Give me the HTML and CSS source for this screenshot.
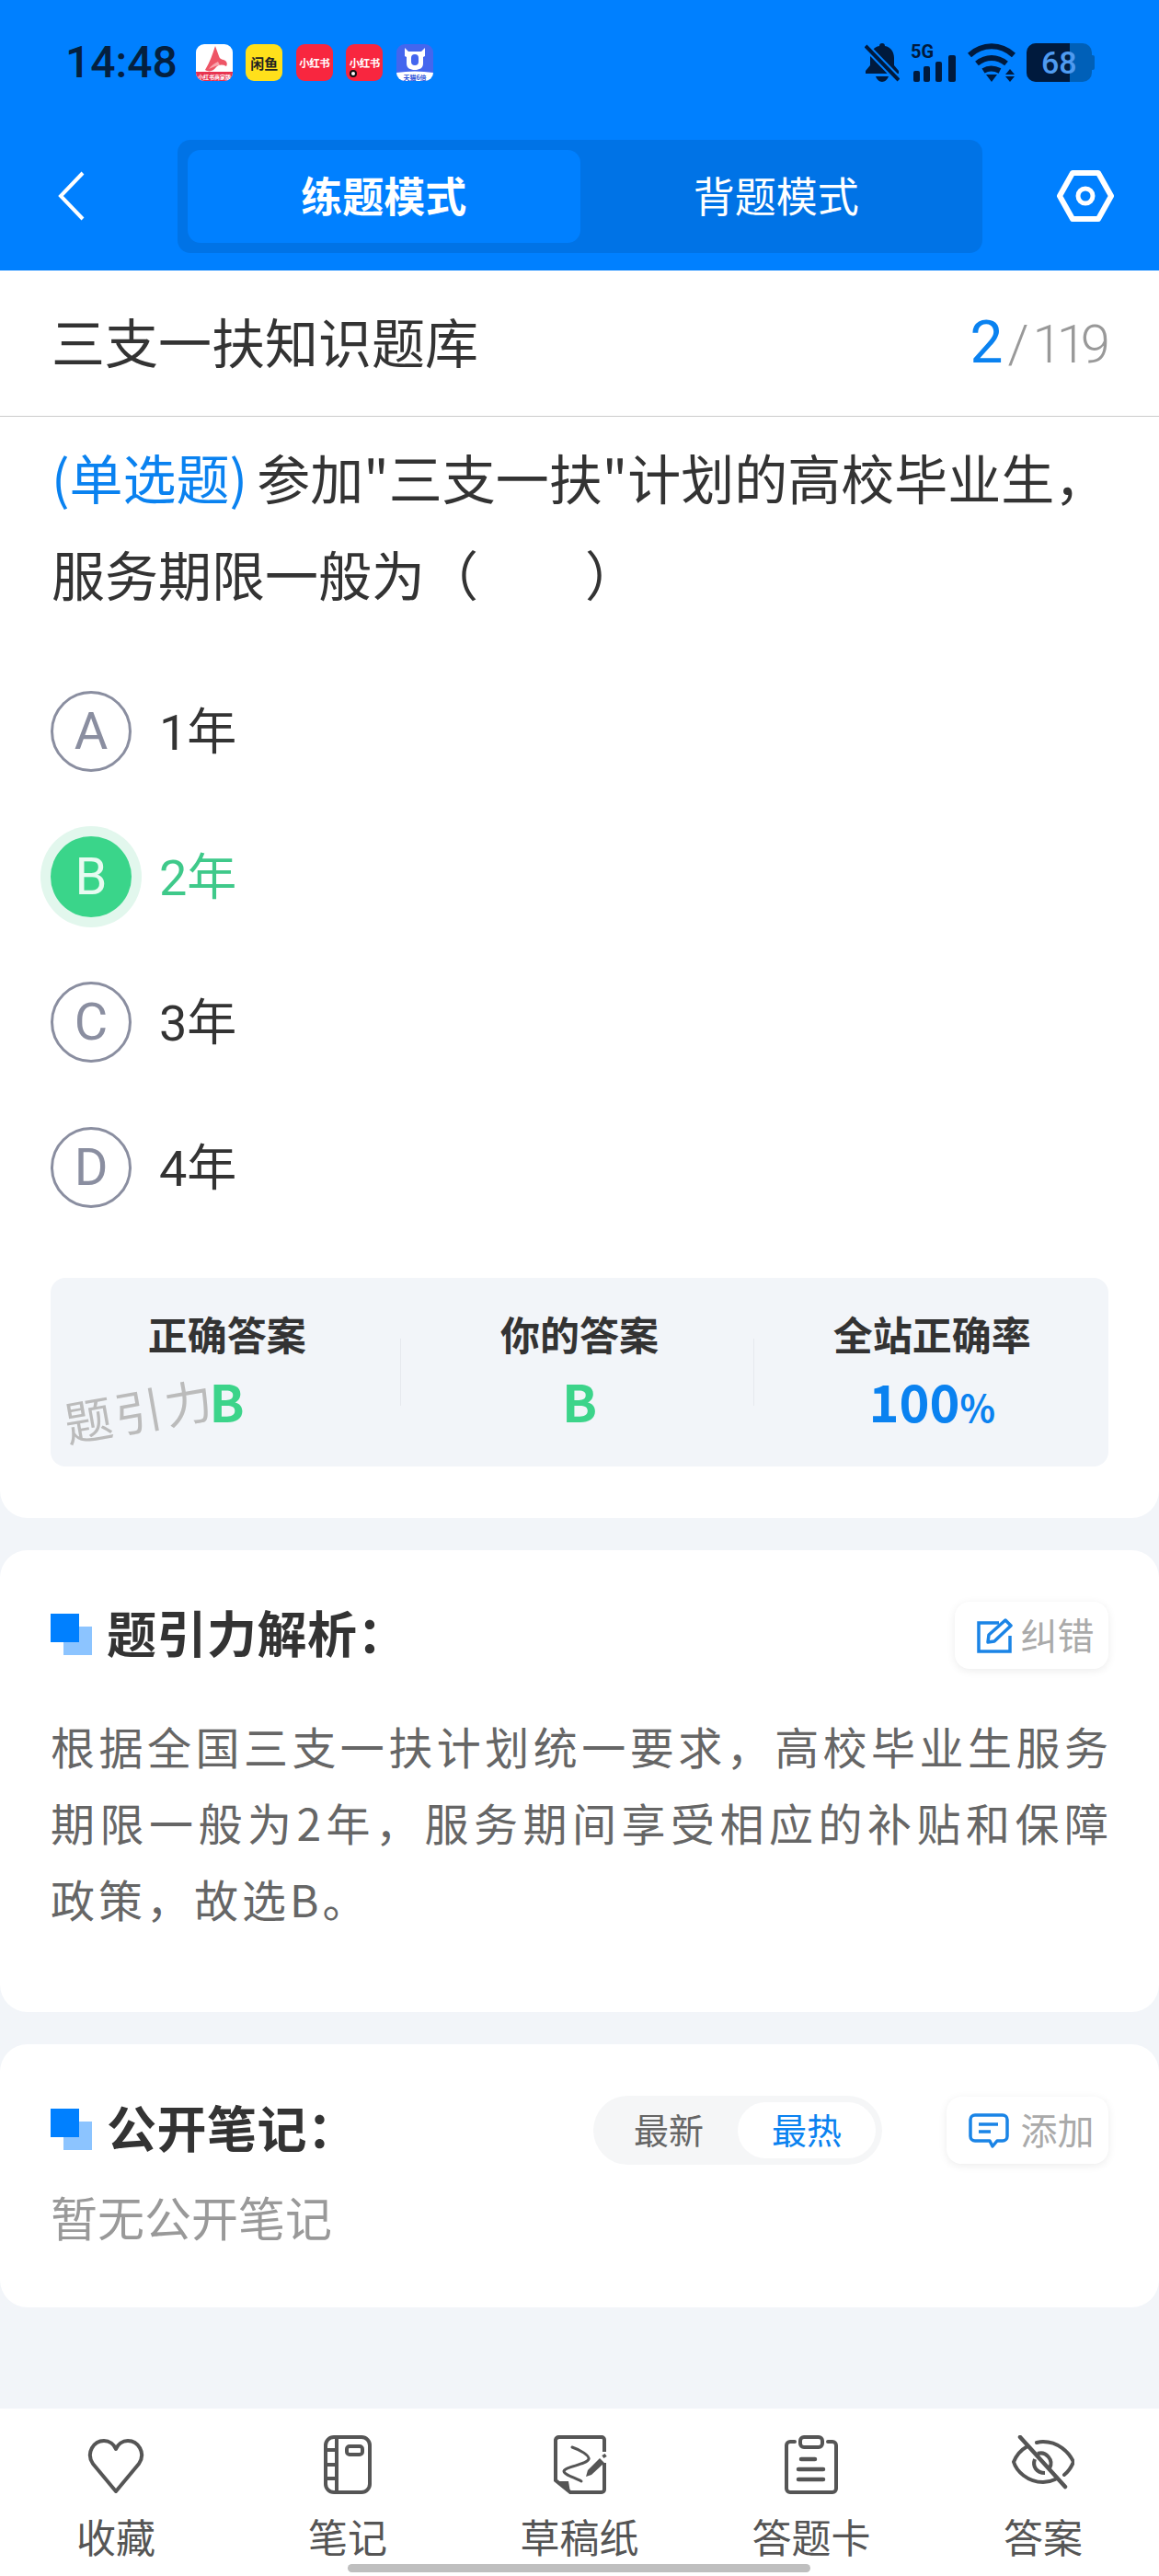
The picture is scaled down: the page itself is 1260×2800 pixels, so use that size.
FILE: index.html
```html
<!DOCTYPE HTML>
<html>
<head>
<meta http-equiv="Content-Type" content="text/html; charset=utf-8" />
<title>三支一扶知识题库</title>
<link rel="stylesheet" href="styles.css">
</head>
<body>
<div class="page">

	<div class="head">
		<div class="status">
			<span class="time">14:48</span>
			<div class="apps">
				<span class="app appA"><svg width="40" height="40" viewBox="0 0 40 40"><path d="M21 2c-3 9-6 18-11 26 5 3 9 1 12-3 3-3 7-3 11-1 2-3 0-6-3-7-3-1-4-1-5-4z" fill="#ee5566"/><path d="M14 27c3-4 6-6 10-8l2 4c-4 0-7 2-12 4z" fill="#f9a6ae"/><rect y="30" width="40" height="10" fill="#e8324f"/><text x="20" y="38" class="appTiny">小红书商家版</text></svg></span>
				<span class="app appB">闲鱼</span>
				<span class="app appC">小红书</span>
				<span class="app appC appDot">小红书<i class="dot"></i></span>
				<span class="app appE"><svg width="40" height="40" viewBox="0 0 40 40"><path d="M9 4l4 4h14l4-4v9l-2 1v7c0 5-4 7-9 7s-9-2-9-7v-7l-2-1z" fill="#fff"/><rect x="16" y="11" width="8" height="12" rx="4" fill="#4466ee"/><path d="M0 31q20-3 40 0v9H0z" fill="#fff"/><text x="20" y="38.5" class="appTiny appTinyBlue">天猫6倍</text></svg></span>
			</div>
			<div class="sysIcons">
				<svg width="38" height="42" viewBox="0 0 38 42"><path d="M19 0c2 0 3 1 3 3 6 1 10 6 10 13v8l5 6v3H1v-3l5-6v-8C6 9 10 4 16 3c0-2 1-3 3-3zM12 36h14c-1 3-4 6-7 6s-6-3-7-6z" fill="#001a3d"/><path d="M1 3l36 37" stroke="#0080ff" stroke-width="8"/><path d="M1 3l36 37" stroke="#001a3d" stroke-width="4"/></svg>
				<svg class="sysSignal" width="50" height="48" viewBox="0 -6 50 48"><text x="0" y="16" class="sysFive">5G</text><rect x="3" y="30" width="7" height="12" rx="2" fill="#001a3d"/><rect x="14" y="25" width="7" height="17" rx="2" fill="#001a3d"/><rect x="27" y="20" width="7" height="22" rx="2" fill="#001a3d"/><rect x="41" y="13" width="8" height="29" rx="2" fill="#001a3d"/></svg>
				<svg width="52" height="42" viewBox="0 0 52 42"><g fill="none" stroke="#001a3d" stroke-width="6"><path d="M2 13c14-13 34-13 48 0"/><path d="M10 22c10-8 22-8 32 0"/><path d="M17 30c5-3 12-3 18 0"/></g><path d="M20 34h12l-6 8zM46 28l5 6H41zM46 42l-5-6h10z" fill="#001a3d"/></svg>
				<span class="battery"><span class="batteryFill"></span><span class="batteryNum">68</span></span>
			</div>
		</div>
		<div class="nav">
			<svg class="navBack" width="30" height="54" viewBox="0 0 30 54"><path d="M27 2L3 27l24 25" fill="none" stroke="#fff" stroke-width="4"/></svg>
			<div class="modeBox">
				<div class="mode modeOn">练题模式</div>
				<div class="mode">背题模式</div>
			</div>
			<svg class="navSet" width="62" height="56" viewBox="0 0 62 56"><path d="M17 3h28l14 25-14 25H17L3 28z" fill="none" stroke="#fff" stroke-width="6" stroke-linejoin="round"/><circle cx="31" cy="28" r="8" fill="none" stroke="#fff" stroke-width="5"/></svg>
		</div>
	</div>

	<div class="card cardFirst">
		<div class="bankRow">
			<span class="bankName">三支一扶知识题库</span>
			<span class="bankNum"><b>2</b><i>/</i><em>119</em></span>
		</div>
		<div class="question"><span class="qType">(单选题)</span>参加"三支一扶"计划的高校毕业生，<br>服务期限一般为（&emsp;&emsp;）</div>
		<ul class="options">
			<li><span class="optDot">A</span><span class="optText">1年</span></li>
			<li class="optOn"><span class="optDot">B</span><span class="optText">2年</span></li>
			<li><span class="optDot">C</span><span class="optText">3年</span></li>
			<li><span class="optDot">D</span><span class="optText">4年</span></li>
		</ul>
		<div class="summary">
			<div class="sumCol"><p>正确答案</p><strong class="green">B</strong></div>
			<div class="sumCol"><p>你的答案</p><strong class="green">B</strong></div>
			<div class="sumCol"><p>全站正确率</p><strong class="blue">100<small>%</small></strong></div>
			<span class="watermark">题引力</span>
		</div>
	</div>

	<div class="card cardJie">
		<div class="cardHead">
			<span class="squares"></span>
			<h2>题引力解析：</h2>
			<a class="toolBtn">
				<svg width="40" height="38" viewBox="0 0 40 38"><path d="M24 5H2v31h34V19" fill="none" stroke="#1a84e6" stroke-width="3.5"/><path d="M13 18L31 2l6 6-18 17-7 1z" fill="none" stroke="#1a84e6" stroke-width="3.5" stroke-linejoin="round"/></svg>
				<span>纠错</span>
			</a>
		</div>
		<div class="jieText">
			<p>根据全国三支一扶计划统一要求，高校毕业生服务</p>
			<p>期限一般为2年，服务期间享受相应的补贴和保障</p>
			<p class="lastLine">政策，故选B。</p>
		</div>
	</div>

	<div class="card cardNote">
		<div class="cardHead">
			<span class="squares"></span>
			<h2>公开笔记：</h2>
			<div class="sortBox">
				<span>最新</span>
				<span class="sortOn">最热</span>
			</div>
			<a class="toolBtn toolAdd">
				<svg width="44" height="38" viewBox="0 0 44 38"><path d="M7 2h30a5 5 0 0 1 5 5v18a5 5 0 0 1-5 5h-6l-5 6-3-6H7a5 5 0 0 1-5-5V7a5 5 0 0 1 5-5z" fill="none" stroke="#1a84e6" stroke-width="3.5" stroke-linejoin="round"/><path d="M11 12h21M11 20h13" stroke="#1a84e6" stroke-width="3.5"/></svg>
				<span>添加</span>
			</a>
		</div>
		<div class="noNote">暂无公开笔记</div>
	</div>

	<div class="tabbar">
		<div class="tab">
			<svg width="64" height="64" viewBox="0 0 64 64"><path d="M32 61L7 31C-1 19 8 6 19 6c6 0 11 4 13 9 2-5 7-9 13-9 11 0 20 13 12 25z" fill="none" stroke="#555" stroke-width="4" stroke-linejoin="round"/></svg>
			<span>收藏</span>
		</div>
		<div class="tab">
			<svg width="64" height="64" viewBox="0 0 64 64"><rect x="8" y="2" width="48" height="60" rx="9" fill="none" stroke="#555" stroke-width="4"/><path d="M20 2v60M8 16h12M8 32h12M8 47h12" stroke="#555" stroke-width="4"/><rect x="31" y="12" width="17" height="9" rx="3" fill="none" stroke="#555" stroke-width="4"/></svg>
			<span>笔记</span>
		</div>
		<div class="tab">
			<svg width="64" height="64" viewBox="0 0 64 64"><path d="M59 30v29a3 3 0 0 1-3 3H22L6 49V5a4 4 0 0 1 4-3h46a3 3 0 0 1 3 3v13" fill="none" stroke="#555" stroke-width="4"/><path d="M7 50h13l2 12z" fill="#555"/><path d="M24 13c9 3 19 9 18 13-2 6-26 8-27 13 0 4 12 7 19 11" fill="none" stroke="#555" stroke-width="3" stroke-linecap="round"/><path d="M54 25l5 5-14 13-6 2 2-7z" fill="#555"/><path d="M58 21l2 3" stroke="#555" stroke-width="4"/></svg>
			<span>草稿纸</span>
		</div>
		<div class="tab">
			<svg width="64" height="64" viewBox="0 0 64 64"><path d="M14 7H9a4 4 0 0 0-4 4v47a4 4 0 0 0 4 4h46a4 4 0 0 0 4-4V11a4 4 0 0 0-4-4h-5" fill="none" stroke="#555" stroke-width="4" stroke-linecap="round"/><rect x="20" y="2" width="24" height="11" rx="4" fill="none" stroke="#555" stroke-width="4"/><path d="M21 26h15M18 37h27M18 48h27" stroke="#555" stroke-width="4.5" stroke-linecap="round"/></svg>
			<span>答题卡</span>
		</div>
		<div class="tab">
			<svg width="68" height="64" viewBox="0 0 68 64"><path d="M17 12C8 17 4 24 2 29c3 10 15 22 32 22 5 0 9-1 13-3M27 8c2-.5 5-1 7-1 16 0 28 11 33 22-2 5-5 10-10 14" fill="none" stroke="#555" stroke-width="4" stroke-linecap="round"/><path d="M28 20c9-3 18 7 13 16M25 26c-3 8 2 15 11 15" fill="none" stroke="#555" stroke-width="4"/><path d="M9 2l49 54" stroke="#555" stroke-width="4.5" stroke-linecap="round"/></svg>
			<span>答案</span>
		</div>
		<span class="homeBar"></span>
	</div>

</div>
</body>
</html>
```

FILE: styles.css
```css
* {
	margin: 0;
	padding: 0;
	box-sizing: border-box;
}

body {
	background: #f2f5f9;
	font-family: "Noto Sans CJK SC", "Noto Sans", sans-serif;
	color: #333;
}

.page {
	width: 1260px;
	height: 2800px;
	display: flex;
	flex-direction: column;
	overflow: hidden;
}

/****顶部*****/
.head {
	height: 294px;
	background: #0080ff;
}

.status {
	height: 152px;
	padding: 47px 70px 0 71px;
	display: flex;
	align-items: flex-start;
}

.time {
	font: 500 48px/42px Roboto, sans-serif;
	color: #04203f;
}

.apps {
	display: flex;
	gap: 14.5px;
	margin-left: 20px;
	margin-top: 1px;
}

.app {
	position: relative;
	width: 40px;
	height: 40px;
	border-radius: 9px;
	overflow: hidden;
	display: flex;
	align-items: center;
	justify-content: center;
	font-weight: 700;
	font-size: 12px;
	white-space: nowrap;
}

.appA {
	background: #fff;
}

.appB {
	background: #ffe01b;
	color: #222;
	font-size: 15px;
}

.appC {
	background: #f8263f;
	color: #fff;
	font-size: 11.5px;
	letter-spacing: -0.5px;
}

.appE {
	background: #4466ee;
}

.dot {
	position: absolute;
	left: 4px;
	bottom: 4px;
	width: 8px;
	height: 8px;
	border-radius: 50%;
	background: #fff;
	border: 2.5px solid #111;
}

.appTiny {
	font-size: 6px;
	fill: #fff;
	text-anchor: middle;
}

.appTinyBlue {
	fill: #2a4fd8;
	font-size: 7px;
}

.sysIcons {
	margin-left: auto;
	display: flex;
	align-items: flex-start;
	gap: 12px;
	height: 42px;
}

.sysSignal {
	margin-top: -6px;
}

.sysFive {
	font: 700 20px "Roboto", sans-serif;
	fill: #001a3d;
}

.battery {
	position: relative;
	width: 71px;
	height: 42px;
	border-radius: 10px;
	background: #0060b8;
	margin-right: 3px;
}

.battery:after {
	content: "";
	position: absolute;
	right: -3px;
	top: 13px;
	width: 3px;
	height: 16px;
	border-radius: 0 2px 2px 0;
	background: #0060b8;
}

.batteryFill {
	position: absolute;
	left: 0;
	top: 0;
	width: 47px;
	height: 42px;
	border-radius: 10px 0 0 10px;
	background: #001a3d;
}

.batteryNum {
	position: absolute;
	left: 16px;
	top: 0;
	font: 500 34px/42px Roboto, sans-serif;
	color: #4f9bf0;
}

.nav {
	height: 142px;
	display: flex;
	align-items: flex-start;
}

.navBack {
	margin: 34px 0 0 63px;
}

.modeBox {
	margin: 0 0 0 100px;
	width: 875px;
	height: 123px;
	padding: 11px;
	border-radius: 14px;
	background: #0073e6;
	display: flex;
}

.mode {
	flex: 1;
	border-radius: 14px;
	text-align: center;
	font-size: 45px;
	line-height: 98px;
	color: #fff;
}

.modeOn {
	background: #0080ff;
	font-weight: 700;
}

.navSet {
	margin: 33px 0 0 81px;
}

/****卡片*****/
.card {
	background: #fff;
	border-radius: 30px;
	margin-bottom: 35px;
}

.cardFirst {
	height: 1356px;
	border-radius: 0 0 30px 30px;
}

.bankRow {
	height: 159px;
	padding: 0 55px 6px 56px;
	border-bottom: 1px solid #ccc;
	display: flex;
	align-items: center;
	justify-content: space-between;
}

.bankName {
	font-size: 58px;
}

.bankNum {
	font: 300 58px/70px Roboto, sans-serif;
	color: #999;
	display: flex;
	align-items: baseline;
	margin-top: 7px;
}

.bankNum b {
	font-weight: 400;
	font-size: 64px;
	color: #0a82f0;
}

.bankNum i {
	font-style: normal;
	margin: 0 4px 0 5px;
}

.bankNum em {
	font-style: normal;
	letter-spacing: -6px;
	margin-right: 4px;
}

.question {
	padding: 13px 40px 0 56px;
	font-size: 58px;
	line-height: 105px;
	white-space: nowrap;
}

.qType {
	color: #0a82f0;
	margin-right: 10px;
}

.options {
	list-style: none;
	margin-top: 40px;
	padding-left: 55px;
}

.options li {
	height: 158px;
	display: flex;
	align-items: center;
	font-size: 54px;
	font-family: Roboto, "Noto Sans CJK SC", sans-serif;
}

.optText {
	margin-top: -8px;
}

.optDot {
	width: 88px;
	height: 88px;
	border-radius: 50%;
	border: 3px solid #8a8ea0;
	color: #8a8ea0;
	font: 400 56px/82px Roboto, sans-serif;
	text-align: center;
	margin-right: 30px;
}

.optOn {
	color: #3fc98a;
}

.optOn .optDot {
	background: #3ad58a;
	border: 0;
	color: #e8fbf1;
	line-height: 88px;
	box-shadow: 0 0 0 11px #e2f7ed;
}

.summary {
	position: relative;
	margin: 41px 55px 0;
	height: 205px;
	background: #f2f5f9;
	border-radius: 16px;
	display: flex;
	padding-top: 24px;
}

.sumCol {
	flex: 1;
	text-align: center;
	position: relative;
}

.sumCol + .sumCol:before {
	content: "";
	position: absolute;
	left: -3px;
	top: 42px;
	height: 73px;
	width: 1px;
	background: #e6e9ee;
}

.sumCol p {
	font-size: 43px;
	font-weight: 700;
	line-height: 72px;
}

.sumCol strong {
	display: block;
	font-size: 56px;
	line-height: 70px;
	margin-top: 2px;
	font-weight: 700;
}

.sumCol small {
	font-size: 40px;
}

.green {
	color: #3cd48a;
}

.blue {
	color: #0a82f0;
}

.watermark {
	position: absolute;
	left: 14px;
	top: 108px;
	font-size: 52px;
	letter-spacing: 3px;
	line-height: 70px;
	color: #bbb;
	transform: rotate(-10deg);
}

.cardHead {
	display: flex;
	align-items: center;
	padding: 0 55px;
}

.cardHead h2 {
	font-size: 54px;
	line-height: 66px;
	font-weight: 700;
	letter-spacing: 0.5px;
	margin: -7px 0 0 16px;
	color: #333;
}

.squares {
	position: relative;
	width: 45px;
	height: 45px;
	flex: none;
	margin-top: -3px;
}

.squares:before {
	content: "";
	position: absolute;
	right: 0;
	bottom: 0;
	width: 31px;
	height: 31px;
	background: #8cc4ff;
}

.squares:after {
	content: "";
	position: absolute;
	left: 0;
	top: 0;
	width: 31px;
	height: 31px;
	background: #0080ff;
}

.toolBtn {
	margin-left: auto;
	width: 167px;
	height: 73px;
	padding-left: 8px;
	border-radius: 16px;
	background: #fff;
	box-shadow: 0 2px 10px rgba(0, 0, 0, 0.08);
	display: flex;
	align-items: center;
	justify-content: center;
	gap: 8px;
	font-size: 40px;
	color: #aaa;
}

.toolBtn span {
	margin-top: -4px;
}

.toolAdd {
	width: 176px;
	margin-left: 70px;
	gap: 13px;
}

.cardJie {
	height: 502px;
	padding-top: 56px;
}

.jieText {
	padding: 0 55px;
	margin-top: 42px;
	font-size: 48px;
	line-height: 83px;
	color: #666;
}

.jieText p {
	text-align: justify;
	text-align-last: justify;
	white-space: nowrap;
}

.jieText .lastLine {
	text-align-last: left;
	letter-spacing: 4px;
}

.cardNote {
	height: 286px;
	padding-top: 56px;
}

.sortBox {
	margin-left: auto;
	width: 314px;
	height: 75px;
	padding: 7px;
	border-radius: 38px;
	background: #f5f6f7;
	display: flex;
	font-size: 38px;
	line-height: 58px;
	color: #666;
}

.sortBox span {
	flex: 1;
	text-align: center;
}

.sortOn {
	background: #fff;
	border-radius: 31px;
	color: #0a82f0;
}

.noNote {
	padding: 0 55px;
	margin-top: 21px;
	font-size: 51px;
	line-height: 70px;
	color: #999;
}

/****底部*****/
.tabbar {
	position: relative;
	margin-top: auto;
	height: 182px;
	background: #fff;
	display: grid;
	grid-template-columns: repeat(5, 252px);
	padding-top: 29px;
}

.tab {
	display: flex;
	flex-direction: column;
	align-items: center;
	font-size: 43px;
	line-height: 60px;
	color: #555;
	gap: 15px;
}

.homeBar {
	position: absolute;
	left: 378px;
	bottom: 4px;
	width: 503px;
	height: 9px;
	border-radius: 5px;
	background: #bfbfbf;
}
```
